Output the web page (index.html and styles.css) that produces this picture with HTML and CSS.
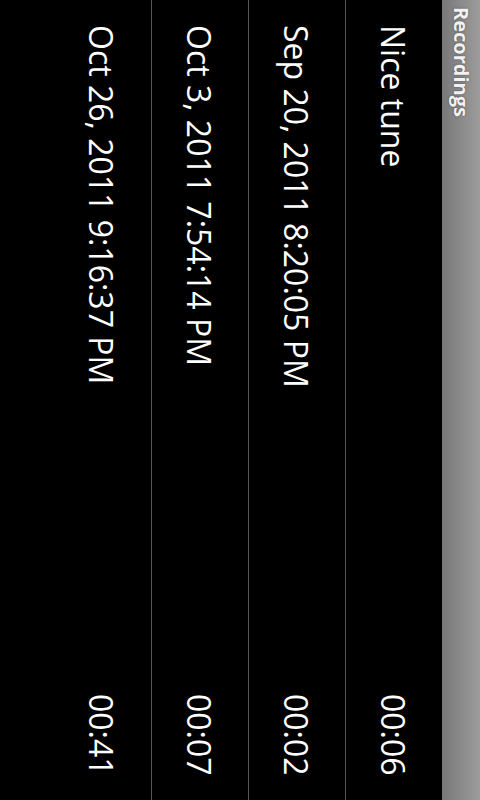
FILE: index.html
```html
<!DOCTYPE html>
<html>
<head>
<meta charset="utf-8">
<link rel="stylesheet" href="styles.css">
</head>
<body>
<div class="screen">
  <div class="titlebar"><span class="title">Recordings</span></div>
  <ul class="list">
    <li class="item"><span class="name">Nice tune</span><span class="dur">00:06</span></li>
    <li class="item"><span class="name">Sep 20, 2011 8:20:05 PM</span><span class="dur">00:02</span></li>
    <li class="item"><span class="name">Oct 3, 2011 7:54:14 PM</span><span class="dur">00:07</span></li>
    <li class="item"><span class="name">Oct 26, 2011 9:16:37 PM</span><span class="dur">00:41</span></li>
  </ul>
</div>
</body>
</html>
```

FILE: styles.css
```css
html, body {
  margin: 0;
  padding: 0;
  background: #000;
}
.screen {
  writing-mode: vertical-rl;
  width: 480px;
  height: 800px;
  background: #000;
  font-family: "Open Sans", "DejaVu Sans", sans-serif;
  color: #fff;
  overflow: hidden;
}
.titlebar {
  block-size: 38px;
  inline-size: 800px;
  background: linear-gradient(to right, #787878, #9c9c9c);
  display: flex;
  align-items: center;
  padding-inline-start: 7px;
  box-sizing: border-box;
}
.title {
  font-weight: bold;
  font-size: 20px;
  color: #f2f2f2;
  text-shadow: 0 0 2px rgba(0, 0, 0, 0.5);
}
.list {
  list-style: none;
  margin: 0;
  padding: 0;
}
.item {
  block-size: 97px;
  inline-size: 800px;
  display: flex;
  align-items: center;
  justify-content: space-between;
  padding-inline: 25px 24px;
  padding-block-start: 2px;
  box-sizing: border-box;
  border-block-end: 1px solid #555;
  font-size: 32px;
}
.item:last-child {
  border-block-end: none;
}
```
